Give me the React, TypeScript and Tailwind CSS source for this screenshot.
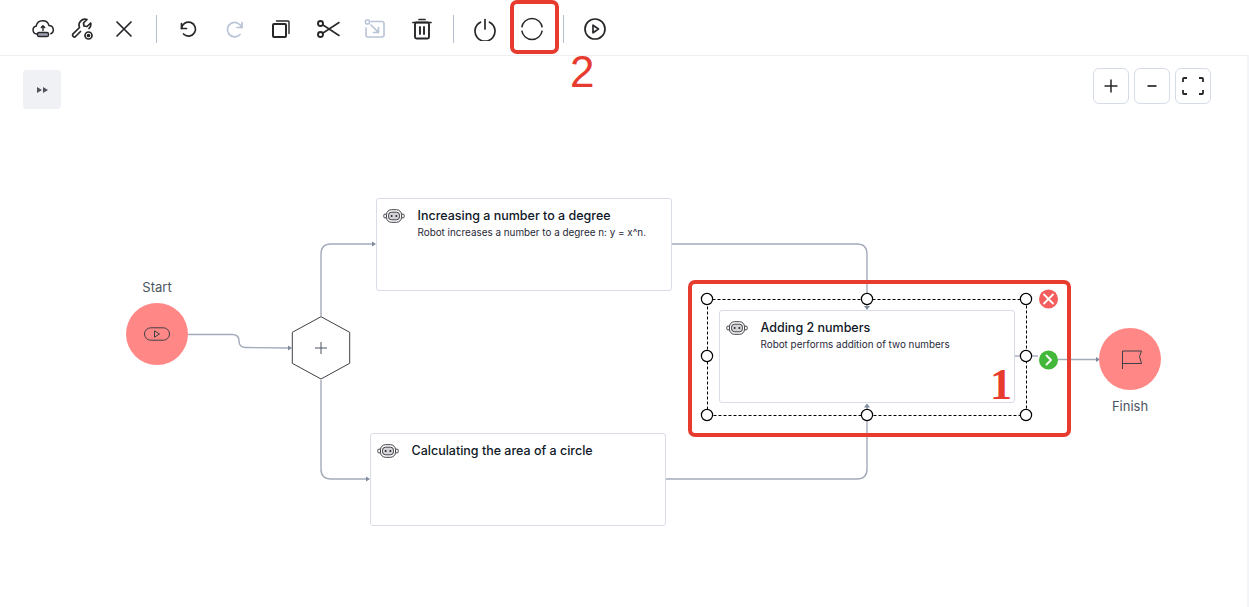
import React from 'react';

const font = { fontFamily: 'Inter, sans-serif' };

const Robot = () => (
  <svg width="22" height="14" viewBox="0 0 22 14" fill="none" stroke="#3f3f46" strokeWidth="1">
    <rect x="3.5" y="0.7" width="15" height="12.6" rx="5" />
    <rect x="5.5" y="3.2" width="11" height="7.6" rx="3" fill="#d4d4d8" />
    <circle cx="8.6" cy="7" r="1" fill="#27272a" stroke="none" />
    <circle cx="13.4" cy="7" r="1" fill="#27272a" stroke="none" />
    <path d="M3.5 5.2H1.8a1 1 0 0 0-1 1v1.6a1 1 0 0 0 1 1h1.7M18.5 5.2h1.7a1 1 0 0 1 1 1v1.6a1 1 0 0 1-1 1h-1.7" />
  </svg>
);

const ToolIcon = ({ children, light }: { children: React.ReactNode; light?: boolean }) => (
  <svg
    width="24"
    height="24"
    viewBox="0 0 24 24"
    fill="none"
    stroke={light ? '#b9c4d6' : '#27272a'}
    strokeWidth="1.7"
    strokeLinecap="round"
    strokeLinejoin="round"
  >
    {children}
  </svg>
);

const Sep = () => <div className="w-px h-[28px] shrink-0 bg-[#b4c0d0]" />;

const Slot = ({ w, children }: { w: string; children: React.ReactNode }) => (
  <div className={`flex items-center justify-center shrink-0 ${w}`}>{children}</div>
);

const Node = ({ className, title, desc }: { className: string; title: string; desc?: string }) => (
  <div className={`absolute bg-white border-[1.5px] border-[#d9dde7] rounded-[3px] flex gap-[13px] pl-[6px] pt-[10px] ${className}`}>
    <div><Robot /></div>
    <div>
      <div className="text-[12.5px] leading-[14px] font-medium text-[#111827]">{title}</div>
      {desc && <div className="text-[9.9px] leading-[12px] text-[#1f2937] mt-[3px]">{desc}</div>}
    </div>
  </div>
);

const handles = [
  [707, 299], [867, 299], [1026, 299],
  [707, 356], [1026, 356],
  [707, 415], [867, 415], [1026, 415],
];

export default function App() {
  return (
    <div className="relative w-[1249px] h-[607px] overflow-hidden bg-white" style={font}>
      {/* toolbar */}
      <div className="h-[56px] border-b border-[#eeeff3] flex items-center pl-[23px] pt-[3px]">
        <Slot w="w-[40px]">
          <ToolIcon>
            <path d="M6.500 17H5.800a4 4 0 0 1-.6-7.900 6.600 6.600 0 0 1 12.800-.6 4.300 4.300 0 0 1 1.800 8.200" strokeWidth="1.500" />
            <path d="M12 13.500V9M10.300 10.500 12 8.800l1.700 1.700" strokeWidth="1.400" />
            <rect x="6.500" y="15.500" width="11" height="4" rx="1.600" fill="#9ca3af" strokeWidth="1.400" />
          </ToolIcon>
        </Slot>
        <Slot w="w-[40px]">
          <ToolIcon>
            <path d="M9.500 14.500 4 20a2 2 0 0 1-2.200-2.900L8.500 10.500a6 6 0 0 1 7.500-8l-3.500 3.500.5 3 3 .5 3.700-3.500a6 6 0 0 1-1.700 5.500" />
            <circle cx="17.500" cy="18.500" r="3.500" />
            <circle cx="17.500" cy="18.500" r="1" fill="#27272a" />
          </ToolIcon>
        </Slot>
        <Slot w="w-[42px]">
          <ToolIcon>
            <path d="M5 5l14 14M19 5 5 19" />
          </ToolIcon>
        </Slot>
        <Slot w="w-[23px]"><Sep /></Slot>
        <Slot w="w-[40px]">
          <ToolIcon>
            <path d="M5.500 6.500v5h5" />
            <path d="M5.500 11.500A7 7 0 1 1 7.500 17" />
          </ToolIcon>
        </Slot>
        <Slot w="w-[54px]">
          <ToolIcon light>
            <path d="M19 5.500v5h-5" />
            <path d="M18.500 10.500A7.200 7.200 0 1 0 17 17.500" />
          </ToolIcon>
        </Slot>
        <Slot w="w-[38px]">
          <ToolIcon>
            <rect x="4" y="7" width="13" height="13" rx="1" strokeWidth="2" />
            <path d="M7.500 4H19a1 1 0 0 1 1 1v11.500" strokeWidth="1.400" />
          </ToolIcon>
        </Slot>
        <Slot w="w-[56px]">
          <ToolIcon>
            <circle cx="4.500" cy="6.500" r="2.500" strokeWidth="1.900" />
            <circle cx="4.500" cy="17.500" r="2.500" strokeWidth="1.900" />
            <path d="M7 8 23 18.500M7 16 23 5.500" strokeWidth="1.500" />
          </ToolIcon>
        </Slot>
        <Slot w="w-[38px]">
          <ToolIcon light>
            <path d="M8 4.500h11a2 2 0 0 1 2 2V18a2 2 0 0 1-2 2H4.500a1.500 1.500 0 0 1-1.500-1.500V11" strokeWidth="1.600" />
            <rect x="2.500" y="3" width="4" height="4" rx="1.500" />
            <path d="M8 8l7.500 7.500M15.500 10.500v5h-5" />
          </ToolIcon>
        </Slot>
        <Slot w="w-[56px]">
          <ToolIcon>
            <path d="M3 5.500h18M9 2.500h6" />
            <rect x="5" y="5.500" width="14" height="16" rx="1.500" strokeWidth="1.900" />
            <path d="M10 10v7M14 10v7" strokeWidth="1.900" />
          </ToolIcon>
        </Slot>
        <Slot w="w-[6px]"><Sep /></Slot>
        <Slot w="w-[58px]">
          <ToolIcon>
            <path d="M12 2.500V12" />
            <path d="M7.500 5.200a10 10 0 1 0 9 0" />
          </ToolIcon>
        </Slot>
        <Slot w="w-[36px]">
          <ToolIcon>
            <path d="M1.800 10.300A10.300 10.300 0 0 1 22.200 10.300" strokeWidth="1.500" strokeLinecap="butt" />
            <path d="M22.200 13.700A10.300 10.300 0 0 1 1.800 13.700" strokeWidth="1.500" strokeLinecap="butt" />
          </ToolIcon>
        </Slot>
        <Slot w="w-[26px]"><Sep /></Slot>
        <Slot w="w-[38px]">
          <ToolIcon>
            <circle cx="12" cy="12" r="10" />
            <path d="M10 8.200 15.500 12 10 15.800Z" />
          </ToolIcon>
        </Slot>
      </div>

      {/* red marker around the reload button */}
      <div className="absolute left-[510px] top-0 w-[49px] h-[54px] border-[4px] border-[#e63b2e] rounded-[7px]" />
      <div className="absolute left-[570px] top-[47px] text-[44px] leading-[50px] text-[#e63b2e]" style={{ fontFamily: '"Liberation Sans", sans-serif' }}>2</div>

      {/* canvas controls */}
      <div className="absolute left-[23px] top-[70px] w-[38px] h-[39px] bg-[#f0f1f5] rounded-[4px] flex items-center justify-center gap-[1px]">
        <div className="w-0 h-0 border-y-[3.500px] border-y-transparent border-l-[5.500px] border-l-[#52525b]" />
        <div className="w-0 h-0 border-y-[3.500px] border-y-transparent border-l-[5.500px] border-l-[#52525b]" />
      </div>
      <div className="absolute left-[1093px] top-[68px] flex gap-[5px]">
        <button className="w-[36px] h-[36px] border border-[#d5dbe7] rounded-[6px] flex items-center justify-center">
          <svg width="14" height="14" viewBox="0 0 14 14" stroke="#27272a" strokeWidth="1.500"><path d="M7 0.500v13M0.500 7h13" /></svg>
        </button>
        <button className="w-[36px] h-[36px] border border-[#d5dbe7] rounded-[6px] flex items-center justify-center">
          <svg width="10" height="4" viewBox="0 0 10 4" stroke="#27272a" strokeWidth="1.700"><path d="M0.500 2h9" /></svg>
        </button>
        <button className="w-[36px] h-[36px] border border-[#d5dbe7] rounded-[6px] flex items-center justify-center">
          <svg width="22" height="18" viewBox="0 0 22 18" fill="none" stroke="#27272a" strokeWidth="1.800"><path d="M1 5V2a1 1 0 0 1 1-1h3M17 1h3a1 1 0 0 1 1 1v3M21 13v3a1 1 0 0 1-1 1h-3M5 17H2a1 1 0 0 1-1-1v-3" /></svg>
        </button>
      </div>
      <div className="absolute left-[1247px] top-[55px] bottom-0 w-[2px] bg-[#f3f4f8]" />

      {/* connections */}
      <svg className="absolute left-0 top-0" width="1249" height="607" fill="none">
        <g stroke="#a3abba" strokeWidth="1.400">
          <path d="M188 334.500H232Q239 334.500 239 341Q239 347.500 246 347.500L288 348" />
          <path d="M321 316V254Q321 244 331 244H372" />
          <path d="M321 380V469Q321 479 331 479H366" />
          <path d="M671 244H857Q867 244 867 254V306" />
          <path d="M665 479H857Q867 479 867 469V407" />
          <path d="M1015 356H1038" />
          <path d="M1058 359.500H1096" />
        </g>
        <g fill="#7f8a9c">
          <path d="M292 348l-4-2.500v5zM376 244l-4-2.500v5zM370 479l-4-2.500v5zM867 310l-3-4h6zM867 403.500l-3 4h6zM1100 359.500l-4-2.500v5z" />
        </g>
        <path d="M321 316.700 349.700 332.300V363.300L321 379 292.300 363.300V332.300Z" fill="white" stroke="#3f3f46" />
        <path d="M321 342v12M315 348h12" stroke="#4b5563" />
      </svg>

      {/* start / finish */}
      <div className="absolute left-[126px] top-[279px] w-[62px] flex flex-col items-center">
        <div className="text-[13px] leading-[16px] text-[#4b5563]">Start</div>
        <div className="mt-[8px] w-[62px] h-[62px] rounded-full bg-[#ff8886] flex items-center justify-center">
          <svg width="26" height="14" viewBox="0 0 26 14" fill="none" stroke="#3f3f46" strokeWidth="1">
            <rect x="0.500" y="0.800" width="25" height="12.400" rx="6.200" />
            <path d="M10.500 3.800 15.500 7 10.500 10.200Z" />
          </svg>
        </div>
      </div>
      <div className="absolute left-[1099px] top-[328px] w-[62px] flex flex-col items-center">
        <div className="w-[62px] h-[62px] rounded-full bg-[#ff8886] flex items-center justify-center">
          <svg className="ml-[3px] mt-[1px]" width="22" height="20" viewBox="0 0 22 20" fill="none" stroke="#3f3f46" strokeWidth="1">
            <path d="M1.500 19V1H20.500L18.500 6.500 20.500 13.500H1.500" />
          </svg>
        </div>
        <div className="mt-[8px] text-[13px] leading-[16px] text-[#4b5563]">Finish</div>
      </div>

      {/* nodes */}
      <Node
        className="left-[375.500px] top-[197.500px] w-[296.500px] h-[93.500px]"
        title="Increasing a number to a degree"
        desc="Robot increases a number to a degree n: y = x^n."
      />
      <Node
        className="left-[369.500px] top-[432.500px] w-[296.500px] h-[93.500px]"
        title="Calculating the area of a circle"
      />
      <Node
        className="left-[718.500px] top-[309.500px] w-[296.500px] h-[93.500px]"
        title="Adding 2 numbers"
        desc="Robot performs addition of two numbers"
      />

      {/* selection frame */}
      <svg className="absolute left-0 top-0" width="1249" height="607" fill="none">
        <rect x="707.500" y="299.500" width="319" height="116" stroke="#000" strokeWidth="1" strokeDasharray="3 2" />
        {handles.map(([x, y]) => (
          <circle key={`${x}-${y}`} cx={x} cy={y} r="5.600" fill="white" stroke="#000" strokeWidth="1.200" />
        ))}
        <circle cx="1048.500" cy="299" r="9.500" fill="#f45d5d" />
        <path d="M1044 294.500l9 9M1053 294.500l-9 9" stroke="white" strokeWidth="1.800" strokeLinecap="round" />
        <circle cx="1048.500" cy="360" r="9.500" fill="#43b73a" />
        <path d="M1046.500 355.500l4.500 4.500-4.500 4.500" stroke="white" strokeWidth="1.800" strokeLinecap="round" strokeLinejoin="round" />
      </svg>

      {/* red marker around the selected node */}
      <div className="absolute left-[688px] top-[280px] w-[383px] h-[157px] border-[4px] border-[#e63b2e] rounded-[7px]" />
      <div className="absolute left-[990px] top-[362px] text-[44px] leading-[46px] font-bold text-[#e63b2e]" style={{ fontFamily: '"Liberation Serif", serif' }}>1</div>
    </div>
  );
}
